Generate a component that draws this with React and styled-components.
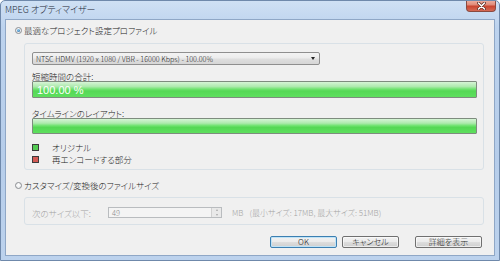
import React from 'react';
import styled, { createGlobalStyle } from 'styled-components';

const Global = createGlobalStyle`
  html, body { margin: 0; padding: 0; background: #ffffff; }
  #root { width: 500px; height: 261px; }
`;

const Window = styled.div`
  width: 500px;
  height: 261px;
  box-sizing: border-box;
  display: flex;
  flex-direction: column;
  padding: 0 4px 4px 4px;
  border: 1px solid #6f89ab;
  border-radius: 5px 5px 0 0;
  background: linear-gradient(180deg, #cfe0f4 0%, #bdd3ee 10%, #b6cdea 60%, #bcd2ed 100%);
  font-family: "Noto Sans CJK JP", "Noto Sans", sans-serif;
  font-weight: 300;
  font-size: 8.5px;
  font-feature-settings: "palt";
  color: #222222;
  overflow: hidden;
`;

const TitleBar = styled.div`
  height: 19px;
  margin-top: -1px;
  display: flex;
  align-items: flex-start;
  justify-content: space-between;
`;

const Title = styled.span`
  margin-top: 5px;
  font-size: 9px;
  line-height: 10px;
  color: #1e2a38;
`;

const CloseBtn = styled.div`
  width: 30px;
  height: 12px;
  box-sizing: border-box;
  margin-right: -1px;
  border: 1px solid #8a4a40;
  border-top: none;
  border-radius: 0 0 4px 4px;
  background: linear-gradient(180deg, #efb3a5 0%, #e08a78 45%, #c9442f 55%, #d56a55 100%);
  display: flex;
  align-items: center;
  justify-content: center;
`;

const Client = styled.div`
  flex: 1;
  display: flex;
  flex-direction: column;
  border: 1px solid #8fa7c6;
  background: #f0f0f0;
  padding: 4px 10px 0 9px;
`;

const RadioRow = styled.label`
  display: flex;
  align-items: center;
  height: 12px;
  margin-top: ${p => p.$mt || 0}px;
  gap: 2px;
  line-height: 12px;
`;

const RadioCircle = styled.span`
  width: 7px;
  height: 7px;
  box-sizing: border-box;
  border-radius: 50%;
  border: 1px solid #8b8e92;
  background: radial-gradient(circle at 50% 40%, #ffffff 0%, #e4e6e8 100%);
  display: flex;
  align-items: center;
  justify-content: center;
  &::after {
    content: '';
    width: 3px;
    height: 3px;
    border-radius: 50%;
    background: ${p => (p.$checked ? 'radial-gradient(circle at 40% 35%, #8fd0f5, #1f5f9c)' : 'transparent')};
  }
`;

const Group = styled.div`
  margin: ${p => p.$mt || 0}px 0 0 9px;
  border: 1px solid #d9e1e7;
  border-radius: 3px;
  padding: ${p => p.$pad};
  display: flex;
  flex-direction: column;
`;

const Combo = styled.div`
  width: 288px;
  height: 13px;
  box-sizing: border-box;
  border: 1px solid #8f8f8f;
  border-radius: 2px;
  background: linear-gradient(180deg, #f3f3f3 0%, #ececec 48%, #dfdfdf 52%, #d6d6d6 100%);
  display: flex;
  align-items: center;
  justify-content: space-between;
  padding: 0 4px 0 3px;
  font-size: 7.2px;
  white-space: nowrap;
`;

const Arrow = styled.span`
  width: 0;
  height: 0;
  border-left: 2.5px solid transparent;
  border-right: 2.5px solid transparent;
  border-top: 3px solid #222;
`;

const FieldLabel = styled.div`
  height: 10px;
  line-height: 10px;
  margin-top: ${p => p.$mt}px;
`;

const Bar = styled.div`
  height: ${p => p.$h}px;
  box-sizing: border-box;
  border: 1px solid #7e8c7e;
  border-radius: 1px;
  background: linear-gradient(180deg, #d6f4d6 0%, #aeeaae 30%, #6ee36e 48%, #55d855 60%, #5ee05e 100%);
  display: flex;
  align-items: center;
  padding-left: 4px;
  color: #ffffff;
  font-size: 11px;
  font-weight: 400;
  font-family: "Liberation Sans", sans-serif;
`;

const Legend = styled.div`
  margin-top: 7px;
  display: flex;
  flex-direction: column;
`;

const LegendItem = styled.div`
  height: 12px;
  display: flex;
  align-items: center;
`;

const Swatch = styled.span`
  width: 7px;
  height: 7px;
  box-sizing: border-box;
  margin-right: 13px;
  border: 1px solid #3c3c3c;
  background: ${p => p.$color};
`;

const SizeRow = styled.div`
  height: 11px;
  display: flex;
  align-items: center;
  color: #a3a3a3;
`;

const SizeLabel = styled.span`
  width: 76px;
`;

const SpinBox = styled.div`
  width: 114px;
  height: 11px;
  box-sizing: border-box;
  border: 1px solid #b9bcbf;
  background: #f4f4f4;
  display: flex;
  align-items: stretch;
  font-size: 7.5px;
`;

const SpinText = styled.span`
  flex: 1;
  padding-left: 3px;
  line-height: 9px;
  color: #8a8a8a;
`;

const SpinButtons = styled.span`
  width: 9px;
  border-left: 1px solid #d0d0d0;
  background: #e9e9e9;
  display: flex;
  flex-direction: column;
  align-items: center;
  justify-content: space-around;
`;

const TinyArrow = styled.span`
  width: 0;
  height: 0;
  border-left: 1.5px solid transparent;
  border-right: 1.5px solid transparent;
  ${p => (p.$up ? 'border-bottom: 2px solid #a8a8a8;' : 'border-top: 2px solid #a8a8a8;')}
`;

const Unit = styled.span`
  margin-left: 10px;
  font-size: 8px;
`;

const Range = styled.span`
  margin-left: 6px;
  font-size: 8px;
`;

const ButtonRow = styled.div`
  margin-top: 11px;
  padding-right: 2px;
  display: flex;
  justify-content: flex-end;
`;

const Button = styled.button`
  width: ${p => p.$w}px;
  height: 12px;
  margin-left: ${p => p.$ml}px;
  box-sizing: border-box;
  padding: 0;
  border: 1px solid ${p => (p.$default ? '#3c7fb1' : '#707070')};
  border-radius: 2px;
  background: linear-gradient(180deg, #f2f2f2 0%, #ebebeb 48%, #dddddd 52%, #cfcfcf 100%);
  box-shadow: inset 0 0 0 1px ${p => (p.$default ? '#bfe3f7' : 'rgba(255,255,255,0.6)')};
  font-family: "Noto Sans CJK JP", "Noto Sans", sans-serif;
  font-weight: 300;
  font-feature-settings: "palt";
  font-size: 8px;
  line-height: 10px;
  color: #1a1a1a;
`;

export default function App() {
  return (
    <>
      <Global />
      <Window>
        <TitleBar>
          <Title>MPEG オプティマイザー</Title>
          <CloseBtn>
            <svg width="9" height="8" viewBox="0 0 9 8">
              <path d="M1.5 1 L7.5 7 M7.5 1 L1.5 7" stroke="#5a2a22" strokeWidth="3" strokeLinecap="round" />
              <path d="M1.5 1 L7.5 7 M7.5 1 L1.5 7" stroke="#ffffff" strokeWidth="1.6" strokeLinecap="round" />
            </svg>
          </CloseBtn>
        </TitleBar>
        <Client>
          <RadioRow>
            <RadioCircle $checked />
            最適なプロジェクト設定プロファイル
          </RadioRow>
          <Group $mt={7} $pad="8px 6px 4px 7px">
            <Combo>
              NTSC HDMV (1920 x 1080 / VBR - 16000 Kbps) - 100.00%
              <Arrow />
            </Combo>
            <FieldLabel $mt={6}>短縮時間の合計:</FieldLabel>
            <Bar $h={17}>100.00 %</Bar>
            <FieldLabel $mt={10}>タイムラインのレイアウト:</FieldLabel>
            <Bar $h={16} />
            <Legend>
              <LegendItem>
                <Swatch $color="#55cc55" />
                オリジナル
              </LegendItem>
              <LegendItem>
                <Swatch $color="#d35a55" />
                再エンコードする部分
              </LegendItem>
            </Legend>
          </Group>
          <RadioRow $mt={9}>
            <RadioCircle />
            カスタマイズ/変換後のファイルサイズ
          </RadioRow>
          <Group $mt={6} $pad="9px 6px 6px 7px">
            <SizeRow>
              <SizeLabel>次のサイズ以下:</SizeLabel>
              <SpinBox>
                <SpinText>49</SpinText>
                <SpinButtons>
                  <TinyArrow $up />
                  <TinyArrow />
                </SpinButtons>
              </SpinBox>
              <Unit>MB</Unit>
              <Range>(最小サイズ: 17MB, 最大サイズ: 51MB)</Range>
            </SizeRow>
          </Group>
          <ButtonRow>
            <Button $w={67} $ml={0} $default>OK</Button>
            <Button $w={57} $ml={5}>キャンセル</Button>
            <Button $w={67} $ml={16}>詳細を表示</Button>
          </ButtonRow>
        </Client>
      </Window>
    </>
  );
}
